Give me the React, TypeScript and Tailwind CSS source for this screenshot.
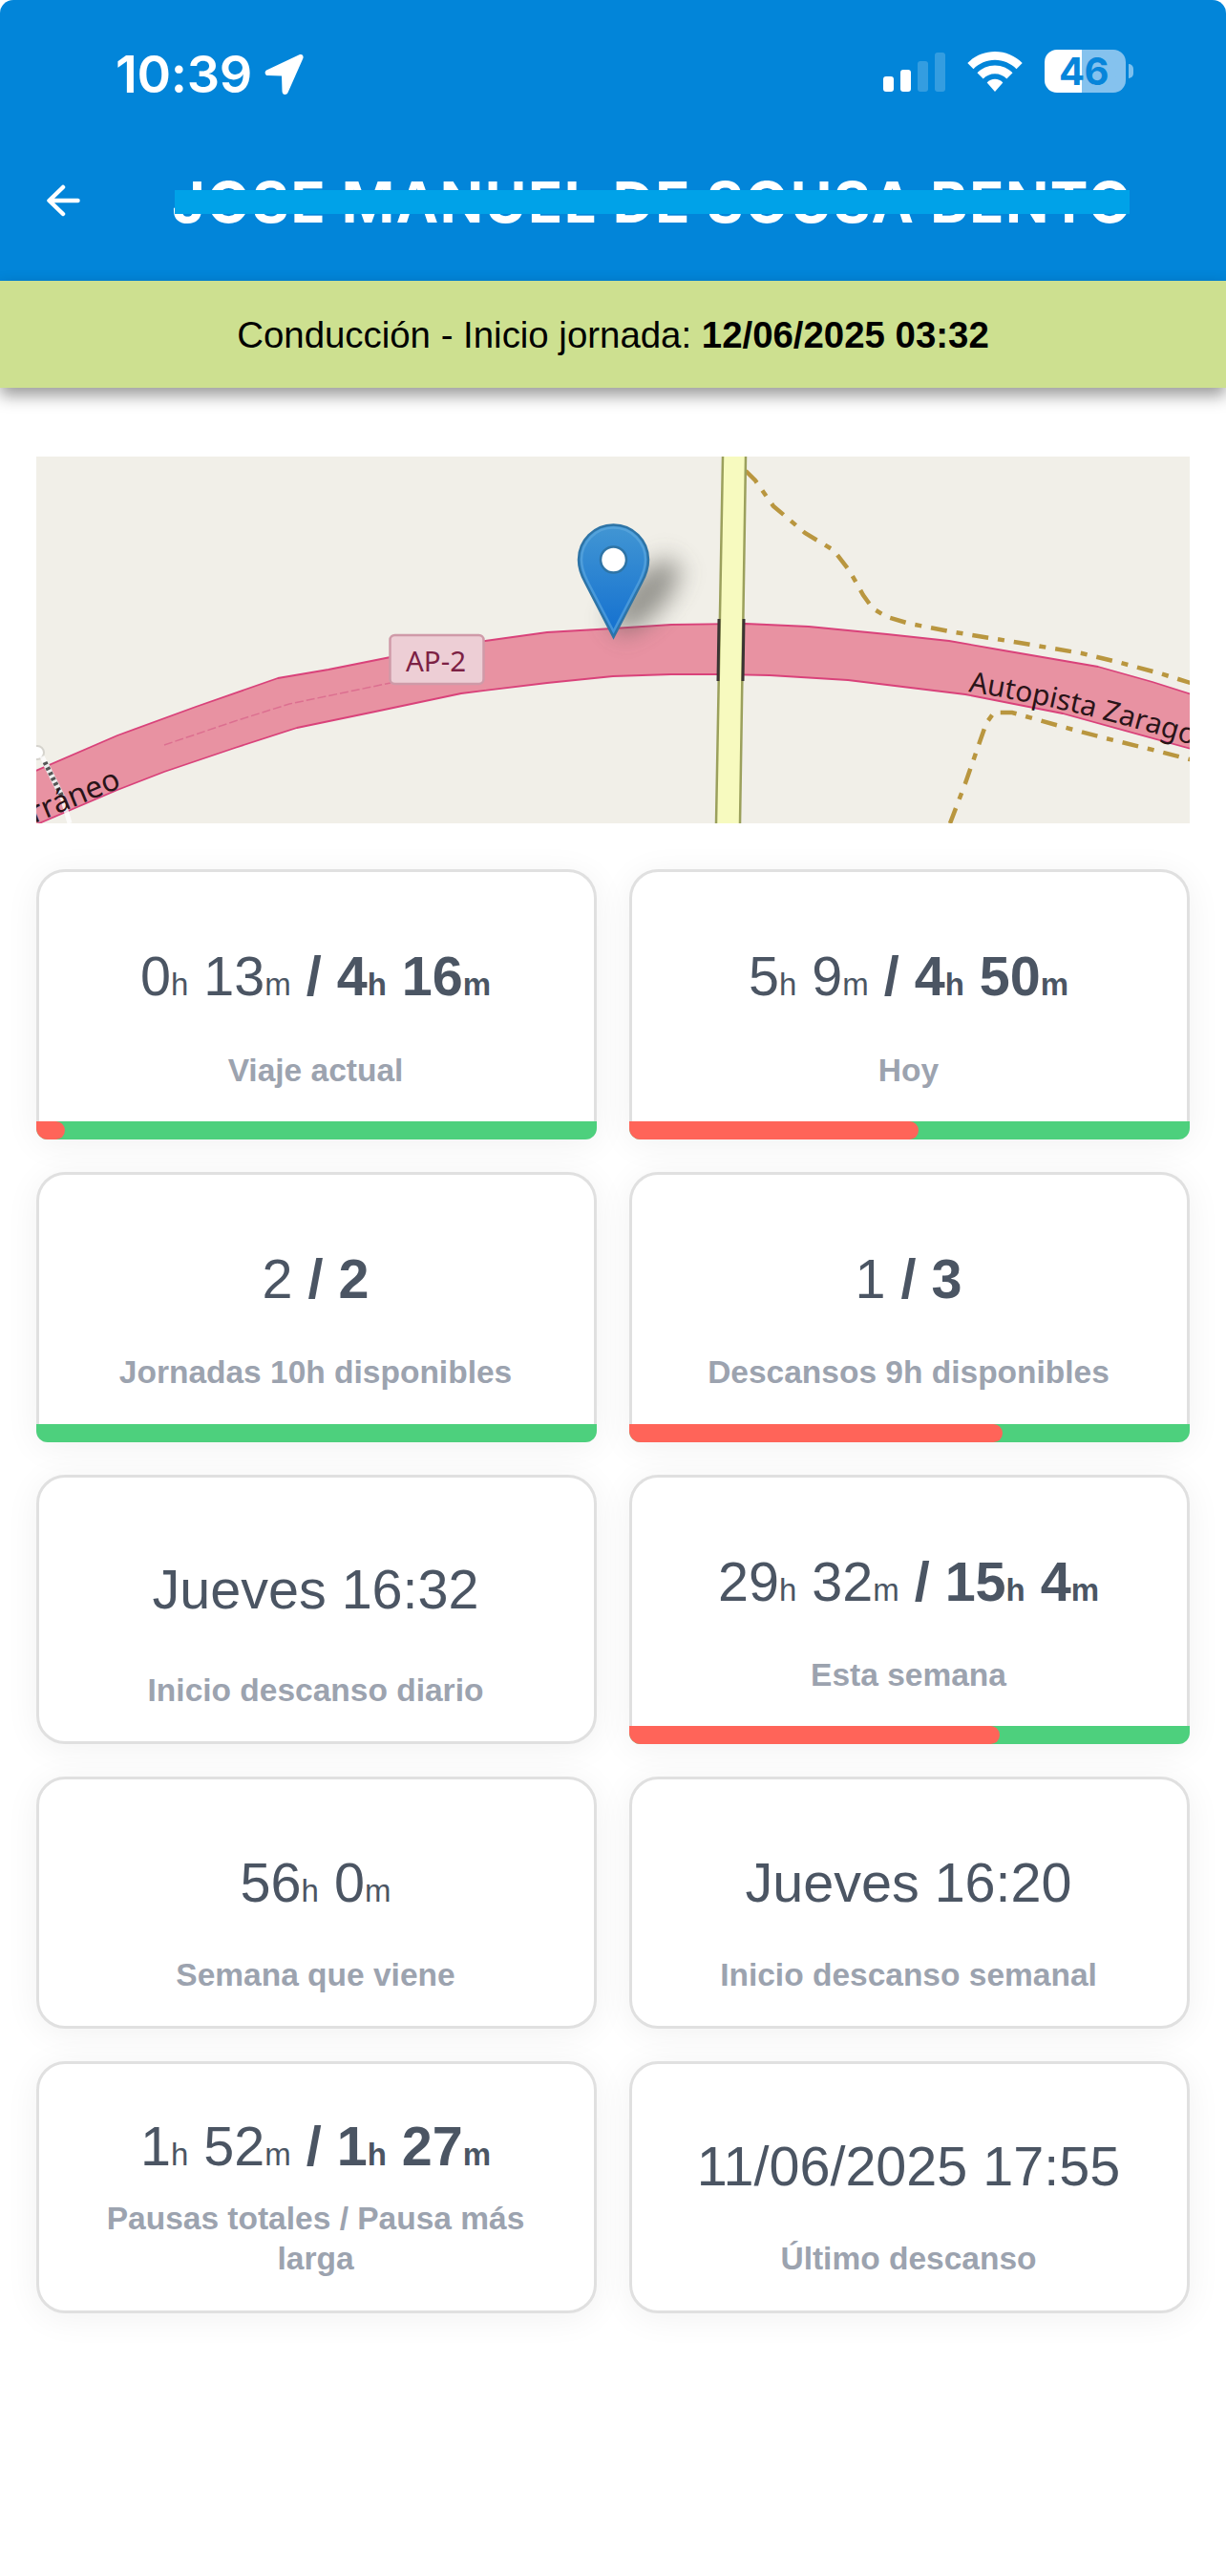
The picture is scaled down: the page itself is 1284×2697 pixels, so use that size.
import React from "react";

interface Duration {
  h: number;
  m: number;
}

interface StatCardProps {
  label: string;
  children: React.ReactNode;
  progress?: number;
  className?: string;
  labelClassName?: string;
}

const Time = ({ h, m }: Duration) => (
  <>
    {h}
    <span className="text-[33px] leading-none">h</span> {m}
    <span className="text-[33px] leading-none">m</span>
  </>
);

const StatCard = ({ label, children, progress, className = "", labelClassName = "" }: StatCardProps) => (
  <div
    className={`relative flex flex-col items-center rounded-[30px] border-[3px] border-[#e0e0e0] bg-white pr-[2px] text-center shadow-[0_5px_36px_rgba(0,0,0,0.06)] ${
      progress !== undefined ? "rounded-b-[12px] border-b-0" : ""
    } ${className}`}
  >
    <div className="text-[57.5px] leading-[66px] whitespace-nowrap text-[#4b5563]">{children}</div>
    <div className={`px-14 text-[33.5px] leading-[42px] font-bold text-[#9ca3af] ${labelClassName}`}>{label}</div>
    {progress !== undefined && (
      <div className="absolute -right-[3px] bottom-0 -left-[3px] h-[19px] overflow-hidden rounded-b-[12px] bg-[#4dd07d]">
        <div className="h-full rounded-r-[10px] bg-[#ff6459]" style={{ width: `${progress}%` }} />
      </div>
    )}
  </div>
);

const StatusBar = () => (
  <div className="flex h-[126px] items-start justify-between pt-[52px] pr-[97px] pl-[121px]">
    <div className="flex items-center gap-[13px]">
      <span className="font-['Inter'] text-[54px] leading-[51px] font-semibold tracking-[-0.3px]">10:39</span>
      <svg width="42" height="44" viewBox="0 0 42 44" fill="currentColor">
        <path d="M36.500 1.300 2.600 17.200C-.5 18.700.2 23 3.600 23.100L18 23.500 18.500 39.500C18.600 43.800 23.200 44 24.600 40.800L40.200 5.500C41.500 2.500 39.500 0 36.500 1.300Z" />
      </svg>
    </div>
    <div className="flex items-start">
      <svg width="66" height="46" viewBox="0 0 66 46" fill="currentColor">
        <rect x="0" y="28" width="11" height="16" rx="3" />
        <rect x="18" y="21" width="11" height="23" rx="3" />
        <rect x="36" y="12" width="11" height="32" rx="3" opacity="0.2" />
        <rect x="54" y="3" width="11" height="41" rx="3" opacity="0.2" />
      </svg>
      <svg className="ml-[22px]" width="58" height="46" viewBox="0 0 58 46" fill="currentColor">
        <path d="M29 2C17.800 2 7.700 6.500.3 14L6.500 20.200C12.300 14.400 20.200 10.800 29 10.800S45.700 14.400 51.500 20.200L57.700 14C50.300 6.500 40.200 2 29 2Z" />
        <path d="M29 16.500C21.800 16.500 15.200 19.500 10.500 24.200L16.700 30.500C19.800 27.300 24.200 25.300 29 25.300S38.200 27.300 41.300 30.500L47.500 24.200C42.800 19.500 36.200 16.500 29 16.500Z" />
        <path d="M29 30.800C25.800 30.800 22.900 32.100 20.700 34.400L29 44 37.300 34.400C35.100 32.100 32.200 30.800 29 30.800Z" />
      </svg>
      <div className="ml-[23px] flex items-center gap-[3px]">
        <div className="flex h-[45px] w-[85px] items-center justify-center rounded-[13px] bg-linear-to-r from-white from-46% to-[#85c2ee] to-46% pr-[3px] font-['Inter'] text-[40px] font-bold tracking-[-0.5px] text-[#0785da]">
          46
        </div>
        <div className="h-[15px] w-[5px] rounded-r-full bg-[#7cc0ee]" />
      </div>
    </div>
  </div>
);

const Header = () => (
  <header className="h-[294px] rounded-t-[14px] bg-[#0285d9] text-white">
    <StatusBar />
    <div className="flex h-[168px] items-start pl-[48px]">
      <svg
        className="mt-[67px]"
        width="36"
        height="34"
        viewBox="0 0 36 34"
        fill="none"
        stroke="currentColor"
        strokeWidth="4.500"
        strokeLinecap="round"
        strokeLinejoin="round"
      >
        <path d="M33.500 17H4M18 3 3.500 17 18 31" />
      </svg>
      <div className="relative mt-[50px] ml-[96px]">
        <h1 className="font-['Inter'] text-[59.5px] leading-[71px] font-bold tracking-[1.6px] whitespace-nowrap">
          JOSE MANUEL DE SOUSA BENTO
        </h1>
        <div className="absolute top-[23px] left-[3px] h-[25px] w-[1000px] bg-[#00a2e8]" />
      </div>
    </div>
  </header>
);

const LocationMap = () => (
  <svg className="block h-[384px] w-[1208px]" viewBox="0 0 1208 384">
    <defs>
      <linearGradient id="pin" x1="0" y1="0" x2="0" y2="1">
        <stop offset="0" stopColor="#4296d3" />
        <stop offset="1" stopColor="#126fd0" />
      </linearGradient>
      <filter id="soft" x="-80%" y="-120%" width="260%" height="340%">
        <feGaussianBlur stdDeviation="13" />
      </filter>
      <path id="roadName" d="M976 246Q1095 265 1220 305" />
    </defs>
    <rect width="1208" height="384" fill="#f1efe8" />

    {/* tracks */}
    <g fill="none" stroke="#b9963f" strokeWidth="4.500" strokeDasharray="17 10 7 10">
      <path d="M743 15 753 25 772 52 784 62 805 80 835 98 852 120 866 145 876 159 891 168 915 175 956 183 1030 195 1095 206 1136 216 1177 227 1212 238" />
      <path d="M957 384 973 342 995 279 1003 268 1022 268 1075 283 1120 295 1165 306 1212 318" />
    </g>

    {/* motorway */}
    <path
      d="M-5 331 85 292 167 262 253 232 306 223 371 210 470 193 535 184 604 180 665 176 743 175 809 178 891 186 956 193 1013 203 1112 220 1169 236 1213 250V307L1075 269 973 249 932 244 850 234 768 229 715 228 665 228 604 230 535 237 445 248 355 267 273 284 208 305 134 330 85 349 3 384-5 388Z"
      fill="#e892a2"
      stroke="#d9427a"
      strokeWidth="1.800"
      strokeLinejoin="round"
    />
    <path d="M134 302 208 277 265 259 371 237" fill="none" stroke="#dc6f90" strokeWidth="1.500" strokeDasharray="9 3" />

    {/* bridge */}
    <path d="M719 0 712 384H737L743 0Z" fill="#f7fabf" />
    <path d="M719 0 712 384M743 0 737 384" stroke="#9ba05c" strokeWidth="2.500" />
    <path d="M715 170 714 235M741 170 740 235" stroke="#3a3433" strokeWidth="3" />

    {/* footbridge */}
    <circle cx="1" cy="310" r="7" fill="#fff" stroke="#d5d3cd" strokeWidth="2" />
    <path d="M6 314 9 320M27 356 35 384" stroke="#fff" strokeWidth="5" opacity="0.8" />
    <path d="M9 320 27 356" stroke="#eee" strokeWidth="6" />
    <path d="M9 320 27 356" stroke="#555" strokeWidth="5" strokeDasharray="3 3" />

    <g fill="#2a1418" fontFamily="'Noto Sans', sans-serif">
      <text x="-2" y="384" fontSize="31.500" transform="rotate(-22.500 -2 384)">
        rráneo
      </text>
      <text fontSize="30">
        <textPath href="#roadName">Autopista Zarago</textPath>
      </text>
    </g>

    <rect x="370.500" y="187" width="98" height="51" rx="5" fill="#edced5" stroke="#cf9aa8" strokeWidth="2.500" />
    <text x="387" y="225" fontFamily="'Noto Sans', sans-serif" fontSize="29.500" fill="#7c2144">
      AP-2
    </text>

    <ellipse cx="638" cy="146" rx="48" ry="20" fill="#55554f" opacity="0.6" filter="url(#soft)" transform="rotate(-48 638 146)" />
    <path
      d="M604.500 189 575 132C570 123 568 116 568 108A36.500 36.500 0 0 1 641 108C641 116 639 123 634 132Z"
      fill="url(#pin)"
      stroke="#2e74a6"
      strokeWidth="2.500"
    />
    <path
      d="M604.500 183 577.500 131C573 122 571 116 571 108A33.500 33.500 0 0 1 638 108C638 116 636 122 631.500 131Z"
      fill="none"
      stroke="#62abe0"
      strokeOpacity="0.6"
      strokeWidth="2.500"
    />
    <circle cx="604.500" cy="108" r="13.500" fill="#fff" stroke="#2e74a6" strokeWidth="2.500" />
  </svg>
);

const App = () => {
  return (
    <div className="min-h-[2697px] w-[1284px] bg-white font-['Liberation_Sans',sans-serif]">
      <Header />
      <div className="flex h-[112px] items-center justify-center bg-[#cde090] pt-[2px] text-[38.4px] whitespace-pre text-black shadow-[0_8px_16px_rgba(0,0,0,0.4)]">
        <span>Conducción - Inicio jornada: </span>
        <b>12/06/2025 03:32</b>
      </div>

      <main className="px-[38px] pt-[72px]">
        <LocationMap />

        <div className="mt-12 grid grid-cols-2 grid-rows-[283px_283px_282px_264px_264px] gap-x-[34px] gap-y-[34px]">
          <StatCard label="Viaje actual" progress={5.1} className="pt-[76px]" labelClassName="mt-[45px]">
            <Time h={0} m={13} /> <b>/ <Time h={4} m={16} /></b>
          </StatCard>
          <StatCard label="Hoy" progress={51.6} className="pt-[76px]" labelClassName="mt-[45px]">
            <Time h={5} m={9} /> <b>/ <Time h={4} m={50} /></b>
          </StatCard>
          <StatCard label="Jornadas 10h disponibles" progress={0} className="pt-[76px]" labelClassName="mt-[44px]">
            2 <b>/ 2</b>
          </StatCard>
          <StatCard label="Descansos 9h disponibles" progress={66.6} className="pt-[76px]" labelClassName="mt-[44px]">
            1 <b>/ 3</b>
          </StatCard>
          <StatCard label="Inicio descanso diario" className="pt-[84px]" labelClassName="mt-[52px]">
            Jueves 16:32
          </StatCard>
          <StatCard label="Esta semana" progress={66.1} className="pt-[76px]" labelClassName="mt-[44px]">
            <Time h={29} m={32} /> <b>/ <Time h={15} m={4} /></b>
          </StatCard>
          <StatCard label="Semana que viene" className="pt-[75px]" labelClassName="mt-[43px]">
            <Time h={56} m={0} />
          </StatCard>
          <StatCard label="Inicio descanso semanal" className="pt-[75px]" labelClassName="mt-[43px]">
            Jueves 16:20
          </StatCard>
          <StatCard label="Pausas totales / Pausa más larga" className="pt-[53px]" labelClassName="mt-[22px]">
            <Time h={1} m={52} /> <b>/ <Time h={1} m={27} /></b>
          </StatCard>
          <StatCard label="Último descanso" className="pt-[74px]" labelClassName="mt-[43px]">
            11/06/2025 17:55
          </StatCard>
        </div>
      </main>
    </div>
  );
};

export default App;
